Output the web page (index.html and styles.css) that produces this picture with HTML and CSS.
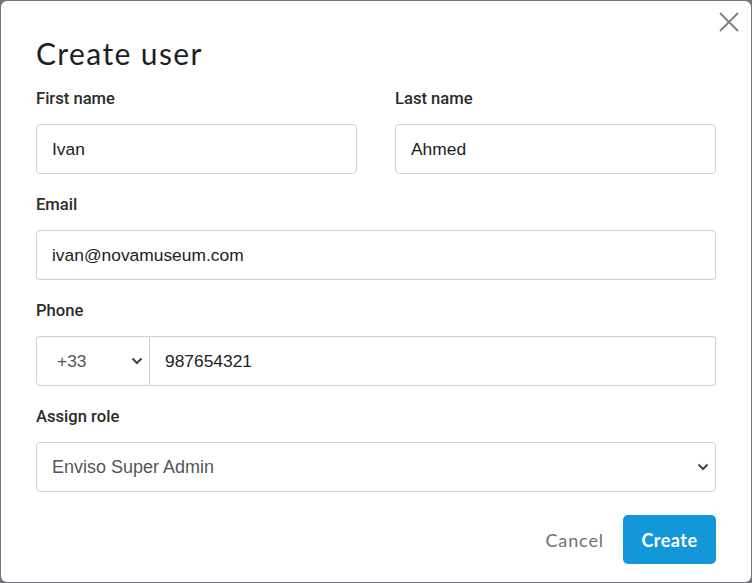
FILE: index.html
```html
<!DOCTYPE html>
<html lang="en">
<head>
<meta charset="utf-8">
<title>Create user</title>
<link rel="stylesheet" href="styles.css">
</head>
<body>
<div class="modal">
  <button class="close" aria-label="Close">
    <svg width="20" height="20" viewBox="0 0 20 20"><path d="M1.5 1.5 L18.5 18.5 M18.5 1.5 L1.5 18.5" stroke="#7d7d7d" stroke-width="1.8" fill="none" stroke-linecap="round"/></svg>
  </button>
  <h1 class="title">Create user</h1>
  <div class="row two">
    <div class="field">
      <label class="label">First name</label>
      <div class="input">Ivan</div>
    </div>
    <div class="field">
      <label class="label">Last name</label>
      <div class="input">Ahmed</div>
    </div>
  </div>
  <div class="row">
    <div class="field">
      <label class="label">Email</label>
      <div class="input">ivan@novamuseum.com</div>
    </div>
  </div>
  <div class="row">
    <div class="field">
      <label class="label">Phone</label>
      <div class="phone">
        <div class="input select code"><span class="muted">+33</span>
          <svg class="chev" width="12" height="8" viewBox="0 0 12 8"><path d="M1.5 1.5 L6 6 L10.5 1.5" stroke="#444" stroke-width="2" fill="none"/></svg>
        </div>
        <div class="input num">987654321</div>
      </div>
    </div>
  </div>
  <div class="row">
    <div class="field">
      <label class="label">Assign role</label>
      <div class="input select role"><span class="muted">Enviso Super Admin</span>
        <svg class="chev" width="12" height="8" viewBox="0 0 12 8"><path d="M1.5 1.5 L6 6 L10.5 1.5" stroke="#444" stroke-width="2" fill="none"/></svg>
      </div>
    </div>
  </div>
  <div class="footer">
    <button class="btn cancel">Cancel</button>
    <button class="btn create">Create</button>
  </div>
</div>
</body>
</html>
```
FILE: styles.css
```css
html, body {
  margin: 0;
  padding: 0;
}
body {
  background: #6f7680;
  width: 752px;
  height: 583px;
  overflow: hidden;
}
.modal {
  position: relative;
  box-sizing: border-box;
  margin: 1px 0 0 1px;
  width: 750px;
  height: 581px;
  background: #fff;
  border-radius: 6px;
  padding: 34px 35px 17px 35px;
  display: flex;
  flex-direction: column;
}
.close {
  position: absolute;
  top: 11px;
  right: 12px;
  border: 0;
  background: none;
  padding: 0;
  width: 20px;
  height: 20px;
  cursor: pointer;
}
.close svg { display: block; }
.title {
  margin: 0;
  font-family: "Lato", sans-serif;
  font-weight: 400;
  font-size: 30px;
  letter-spacing: 1.4px;
  line-height: 36px;
  color: #1f1f1f;
}
.row {
  margin-top: 19px;
}
.two {
  display: grid;
  grid-template-columns: 1fr 1fr;
  column-gap: 38px;
  margin-top: 16px;
}
.field {
  display: flex;
  flex-direction: column;
}
.label {
  font-family: "Roboto", sans-serif;
  font-weight: 500;
  font-size: 16.6px;
  line-height: 24px;
  color: #2b2b2b;
  margin-bottom: 13px;
}
.input {
  box-sizing: border-box;
  height: 50px;
  border: 1px solid #cfcfcf;
  border-radius: 4px;
  padding: 0 15px;
  display: flex;
  align-items: center;
  font-family: "Liberation Sans", Arial, sans-serif;
  font-size: 17.4px;
  color: #222;
}
.muted { color: #555; }
.select {
  justify-content: space-between;
  padding-right: 6px;
}
.role { font-size: 18px; }
.chev { display: block; }
.phone {
  display: flex;
}
.code {
  width: 114px;
  border-radius: 4px 0 0 4px;
  flex: none;
  padding-left: 20px;
}
.num {
  flex: 1;
  border-left: 0;
  border-radius: 0 4px 4px 0;
}
.footer {
  margin-top: 23px;
  display: flex;
  justify-content: flex-end;
  gap: 19px;
}
.btn {
  font-family: "Lato", sans-serif;
  font-size: 18px;
  height: 49px;
  border: 0;
  border-radius: 5px;
  cursor: pointer;
  letter-spacing: 0.5px;
}
.cancel {
  background: none;
  color: #707070;
  padding: 0;
  font-weight: 400;
  letter-spacing: 0.9px;
}
.create {
  background: #1297d9;
  color: #fff;
  font-weight: 700;
  width: 93px;
}
```
